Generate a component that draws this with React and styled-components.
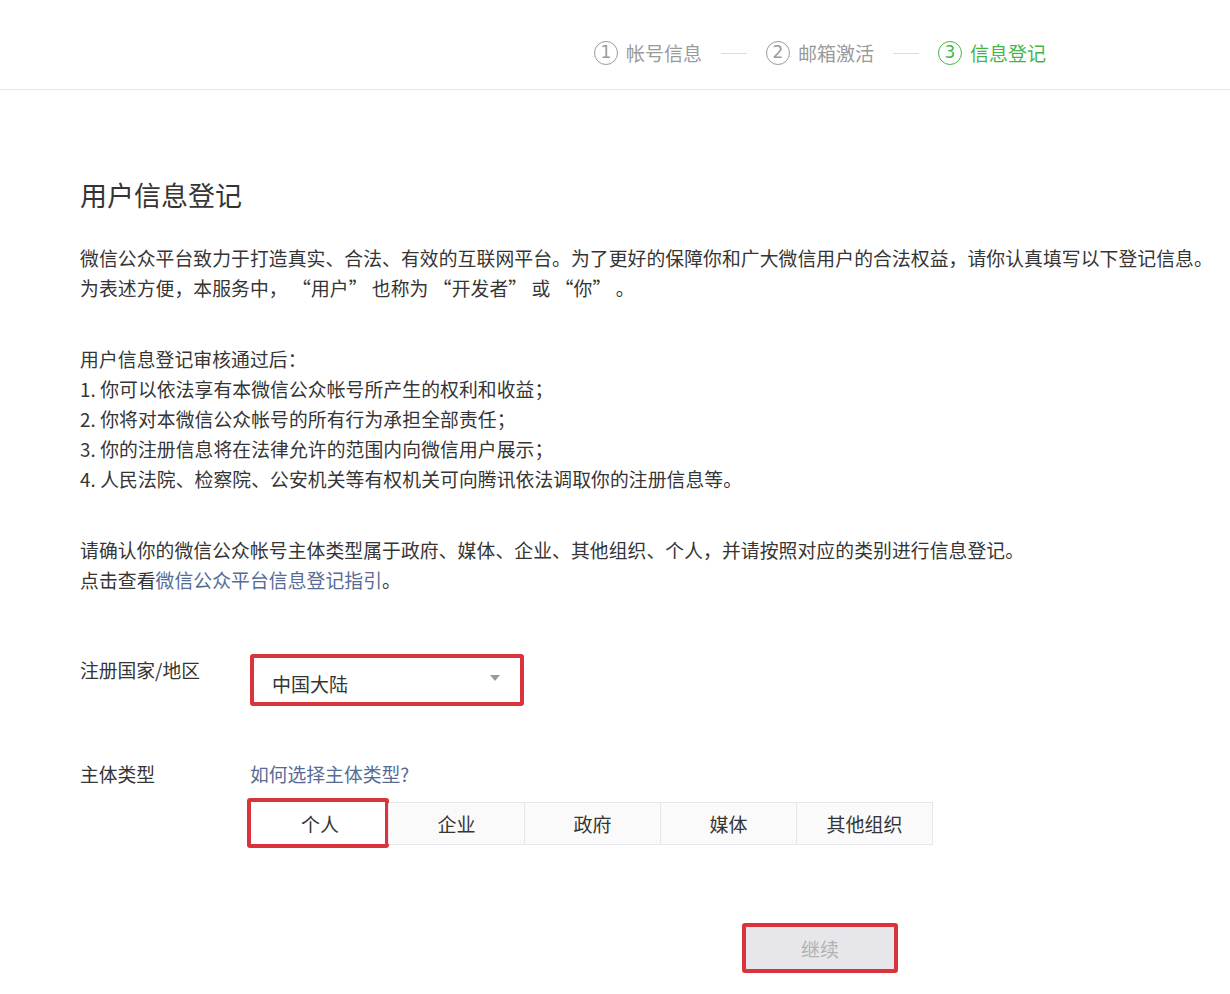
import React from "react"
import styled, { createGlobalStyle } from "styled-components"

const GlobalStyle = createGlobalStyle`
  body {
    margin: 0;
    background: #fff;
    font-family: "Noto Sans CJK SC", "Noto Sans", "Liberation Sans", sans-serif;
    color: #353535;
  }
`

const Header = styled.div`
  height: 90px;
  border-bottom: 1px solid #e7e7eb;
  display: flex;
  align-items: center;
  justify-content: flex-end;
  padding-right: 184px;
  padding-top: 16px;
  box-sizing: border-box;
`

const Step = styled.div`
  display: flex;
  align-items: center;
  gap: 8px;
  font-size: 19px;
  color: ${(p) => (p.active ? "#44b549" : "#9a9a9a")};
`

const Circle = styled.span`
  width: 22px;
  height: 22px;
  border: 1.3px solid currentColor;
  border-radius: 50%;
  display: flex;
  align-items: center;
  justify-content: center;
  font-size: 17px;
  line-height: 1;
  font-family: "DejaVu Sans", sans-serif;
`

const StepLine = styled.span`
  width: 26px;
  height: 1px;
  background: #dcdcdc;
  margin: 2px 19px 0 19px;
`

const Main = styled.div`
  padding: 87px 0 0 80px;
`

const Title = styled.h2`
  margin: 0 0 30px;
  font-size: 27px;
  line-height: 36px;
  font-weight: 400;
  color: #353535;
`

const Para = styled.p`
  margin: 0 0 41px;
  font-size: 18.8px;
  line-height: 30px;
  color: #353535;
  letter-spacing: 0.1px;
`

const Link = styled.a`
  color: #576b95;
  text-decoration: none;
`

const FormRow = styled.div`
  display: flex;
  align-items: flex-start;
  margin-top: ${(p) => p.top}px;
`

const Label = styled.div`
  width: 170px;
  font-size: 18.8px;
  line-height: 30px;
  color: #353535;
  padding-top: 1px;
`

const SelectBox = styled.div`
  width: 274px;
  height: 52px;
  box-sizing: border-box;
  border: 4px solid #d9343b;
  border-radius: 3px;
  display: flex;
  align-items: center;
  justify-content: space-between;
  padding: 6px 20px 0 18px;
  font-size: 19px;
  color: #353535;
`

const Caret = styled.span`
  width: 0;
  height: 0;
  border-left: 5px solid transparent;
  border-right: 5px solid transparent;
  border-top: 6px solid #9a9a9a;
  margin-top: -10px;
`

const Column = styled.div`
  display: flex;
  flex-direction: column;
`

const HelpLink = styled(Link)`
  font-size: 18.8px;
  line-height: 30px;
  padding-top: 1px;
`

const Options = styled.div`
  display: flex;
  margin-top: 13px;
  margin-left: 1px;
  border: 1px solid #e7e7eb;
  background: #fafafa;
`

const Option = styled.div`
  width: 136px;
  height: 41px;
  box-sizing: border-box;
  display: flex;
  align-items: center;
  justify-content: center;
  font-size: 19px;
  color: #353535;
  border-left: ${(p) => (p.first ? "none" : "1px solid #e7e7eb")};
  position: relative;
`

const Highlight = styled.span`
  position: absolute;
  left: -5px;
  top: -5px;
  right: -1px;
  bottom: -4px;
  border: 4px solid #d9343b;
  border-radius: 3px;
  background: #fff;
  z-index: 0;
`

const OptionText = styled.span`
  position: relative;
  z-index: 1;
`

const Footer = styled.div`
  margin: 78px 0 0 662px;
  width: 156px;
  height: 50px;
  box-sizing: border-box;
  border: 4px solid #d9343b;
  border-radius: 3px;
`

const Button = styled.button`
  width: 100%;
  height: 100%;
  border: none;
  background: #e7e7eb;
  color: #b2b2b2;
  font-size: 19px;
  font-family: inherit;
  padding-top: 2px;
`

const steps = [
  { n: "1", label: "帐号信息" },
  { n: "2", label: "邮箱激活" },
  { n: "3", label: "信息登记", active: true },
]

const types = ["个人", "企业", "政府", "媒体", "其他组织"]

export default function App() {
  return (
    <>
      <GlobalStyle />
      <Header>
        {steps.map((s, i) => (
          <React.Fragment key={s.n}>
            {i > 0 && <StepLine />}
            <Step active={s.active}>
              <Circle>{s.n}</Circle>
              {s.label}
            </Step>
          </React.Fragment>
        ))}
      </Header>
      <Main>
        <Title>用户信息登记</Title>
        <Para>
          微信公众平台致力于打造真实、合法、有效的互联网平台。为了更好的保障你和广大微信用户的合法权益，请你认真填写以下登记信息。
          <br />
          为表述方便，本服务中，&nbsp;“用户”&nbsp;也称为&nbsp;“开发者”&nbsp;或&nbsp;“你”&nbsp;。
        </Para>
        <Para>
          用户信息登记审核通过后：
          <br />
          1. 你可以依法享有本微信公众帐号所产生的权利和收益；
          <br />
          2. 你将对本微信公众帐号的所有行为承担全部责任；
          <br />
          3. 你的注册信息将在法律允许的范围内向微信用户展示；
          <br />
          4. 人民法院、检察院、公安机关等有权机关可向腾讯依法调取你的注册信息等。
        </Para>
        <Para>
          请确认你的微信公众帐号主体类型属于政府、媒体、企业、其他组织、个人，并请按照对应的类别进行信息登记。
          <br />
          点击查看<Link href="#">微信公众平台信息登记指引</Link>。
        </Para>
        <FormRow top={59}>
          <Label>注册国家/地区</Label>
          <SelectBox>
            中国大陆
            <Caret />
          </SelectBox>
        </FormRow>
        <FormRow top={52}>
          <Label>主体类型</Label>
          <Column>
            <HelpLink href="#">如何选择主体类型?</HelpLink>
            <Options>
              {types.map((t, i) => (
                <Option key={t} first={i === 0}>
                  {i === 0 && <Highlight />}
                  <OptionText>{t}</OptionText>
                </Option>
              ))}
            </Options>
          </Column>
        </FormRow>
        <Footer>
          <Button>继续</Button>
        </Footer>
      </Main>
    </>
  )
}
